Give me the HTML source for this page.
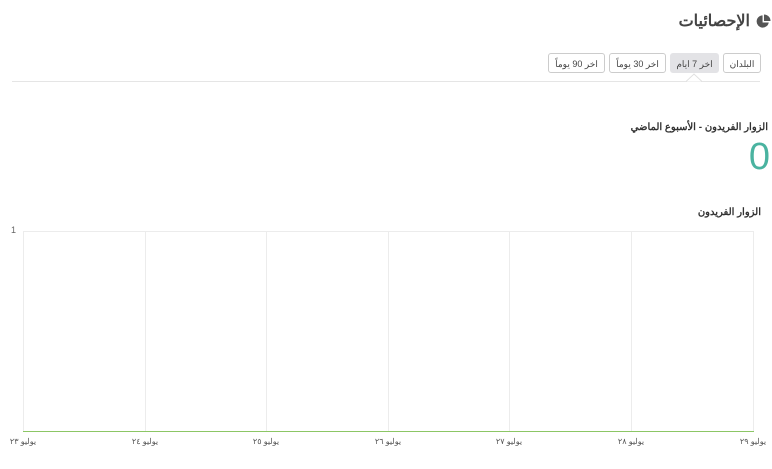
<!DOCTYPE html>
<html><head><meta charset="utf-8"><style>
body{margin:0;width:772px;height:469px;background:#fff;font-family:"Liberation Sans","Noto Sans CJK SC",sans-serif;color:#333;position:relative;overflow:hidden}
.a{position:absolute;white-space:nowrap}
.btn{position:absolute;top:53px;height:20px;border:1px solid #ccc;border-radius:3px;background:#fff;font-size:9px;line-height:20px;text-align:center;color:#444;box-sizing:border-box}
.vl{position:absolute;top:231px;height:200px;width:1px;background:#ececec}
.xl{position:absolute;top:437px;font-size:8px;color:#555;width:40px;text-align:center;direction:rtl}
</style></head><body>
<svg class="a" style="left:756px;top:14px" width="15" height="15" viewBox="0 0 16 16"><path d="M7 1.5A6.5 6.5 0 1 0 13.6 9H7z" fill="#555"/><path d="M8.5 0.5V7.5H15.5A7 7 0 0 0 8.5 0.5z" fill="#555"/></svg>
<div class="a" style="right:22px;top:11px;font-size:16px;font-weight:bold;color:#444;direction:rtl">الإحصائيات</div>
<div class="a" style="left:12px;top:81px;width:748px;height:1px;background:#e5e5e5"></div>
<svg class="a" style="left:686px;top:73px" width="16" height="9"><path d="M0 8.5L8 1L16 8.5" fill="#fff" stroke="#e0e0e0"/></svg>
<div class="btn" style="left:723px;width:38px">البلدان</div>
<div class="btn" style="left:670px;width:49px;background:#e3e3e6;border-color:#e3e3e6">اخر 7 ايام</div>
<div class="btn" style="left:609px;width:57px">اخر 30 يوماً</div>
<div class="btn" style="left:548px;width:57px">اخر 90 يوماً</div>
<div class="a" style="right:4px;top:122px;font-size:10px;font-weight:bold;direction:rtl">الزوار الفريدون - الأسبوع الماضي</div>
<div class="a" style="right:2px;top:134px;font-size:38px;color:#4ab3a0;line-height:46px">0</div>
<div class="a" style="right:11px;top:207px;font-size:10px;font-weight:bold;direction:rtl">الزوار الفريدون</div>
<div class="a" style="left:11px;top:225px;font-size:9px;color:#666">1</div>
<div class="a" style="left:23px;top:231px;width:730px;height:1px;background:#ececec"></div>
<div class="vl" style="left:23px"></div><div class="vl" style="left:145px"></div><div class="vl" style="left:266px"></div><div class="vl" style="left:388px"></div><div class="vl" style="left:509px"></div><div class="vl" style="left:631px"></div><div class="vl" style="left:753px"></div>
<div class="a" style="left:23px;top:431px;width:731px;height:1px;background:#8cc665"></div>
<div class="xl" style="left:3px">يوليو ٢٣</div>
<div class="xl" style="left:125px">يوليو ٢٤</div>
<div class="xl" style="left:246px">يوليو ٢٥</div>
<div class="xl" style="left:368px">يوليو ٢٦</div>
<div class="xl" style="left:489px">يوليو ٢٧</div>
<div class="xl" style="left:611px">يوليو ٢٨</div>
<div class="xl" style="left:733px">يوليو ٢٩</div>
</body></html>
